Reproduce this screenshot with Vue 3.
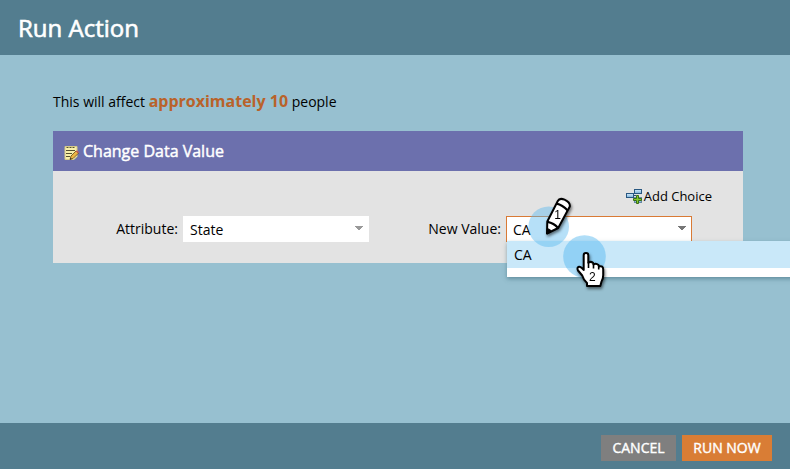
<script setup>
const people = 10
const options = ['CA']
</script>

<template>
  <div class="dialog">
    <header class="title">Run Action</header>
    <main class="body">
      <p class="notice">This will affect <b>approximately {{ people }}</b> people</p>
      <section class="panel">
        <div class="panel-head">
          <svg class="note" width="16" height="16" viewBox="0 0 16 16">
            <path d="M1 1.500h12v10l-3 3H1z" fill="#f8efaa" stroke="#d5ca88" />
            <path d="M2.500 2.500h2M5.500 2.500h2M8.500 2.500h2M2 5.500h9M2 8.500h6M2 11.500h4" stroke="#55502f" />
            <path d="M6 14.500l1-3.500 5-5 2.300 2.300-5 5z" fill="#edb544" stroke="#624719" stroke-width=".8" />
            <path d="M11.800 6.200l1.200-1 2 2-1.100 1.100z" fill="#c95b50" />
            <path d="M6 14.500l.5-1.800 1.300 1.300z" fill="#222" />
          </svg>
          <span>Change Data Value</span>
        </div>
        <div class="panel-body">
          <div class="add">
            <svg width="17" height="16" viewBox="0 0 17 16">
              <defs>
                <linearGradient id="box" x1="0" y1="0" x2="0" y2="1">
                  <stop offset="0" stop-color="#d8efff" /><stop offset="1" stop-color="#78aed7" />
                </linearGradient>
              </defs>
              <path d="M7 7.500h3" stroke="#244f78" />
              <rect x=".5" y="5.500" width="7" height="4" fill="url(#box)" stroke="#285781" />
              <rect x="8.500" y="1.500" width="7" height="4" fill="url(#box)" stroke="#285781" />
              <rect x="8.500" y="9.500" width="7" height="5" fill="url(#box)" stroke="#6689a4" />
              <path d="M10.500 7.500h2v3h3v2h-3v3h-2v-3h-3v-2h3z" fill="#83c72d" stroke="#386f16" />
            </svg>
            <span>Add Choice</span>
          </div>
          <div class="fields">
            <label class="attribute">Attribute:</label>
            <div class="select"><span>State</span>
              <svg class="arrow" width="8" height="5" viewBox="0 0 8 5"><path d="M0 0h8v1H7v1H6v1H5v1H3V3H2V2H1V1H0z" /></svg>
            </div>
            <label class="value">New Value:</label>
            <div class="select active"><span>CA</span>
              <svg class="arrow" width="8" height="5" viewBox="0 0 8 5"><path d="M0 0h8v1H7v1H6v1H5v1H3V3H2V2H1V1H0z" /></svg>
              <div class="menu">
                <div v-for="option in options" :key="option" class="option">{{ option }}</div>
              </div>
            </div>
          </div>
        </div>
      </section>
    </main>
    <footer class="footer">
      <button class="cancel">CANCEL</button>
      <button class="run">RUN NOW</button>
    </footer>
    <svg class="markers" width="100" height="110" viewBox="520 190 100 110">
      <circle cx="548.700" cy="226.700" r="20.300" class="halo" />
      <circle cx="584.500" cy="256.500" r="21.300" class="halo strong" />
      <g class="shadow">
        <path d="M547 233.500L547.300 221.500L557.800 201Q559.500 197.500 564.500 199.700Q570.500 202.500 569.800 206.500L558.200 228Z" class="ink" />
        <path d="M556.500 203.700Q562.500 205 567.500 210.300M547.500 221.800Q554 223 557.800 227.800" class="line" />
        <path d="M547 234l.2-5.500q3 .5 4.300 3z" class="tip" />
        <text x="557.500" y="219" text-anchor="middle">1</text>
      </g>
      <g class="shadow">
        <path d="M583.700 270V255.300Q583.700 253 586 253Q588.300 253 588.300 255.300V262.800Q590.500 261 593 262.800L593.500 264.500Q596 262.700 598.500 265L599 266.500Q603.200 265.300 603.200 269.500V275Q603.200 279 601.500 281.500L600.300 286H587V283Q583.500 280 582.200 275.500L578 270.500Q576.500 267.500 579 266.800Q581 266.500 583.700 270Z" class="ink" />
        <path d="M588.500 262v6M593.500 264v4.500M598.700 265.500v4" class="line fine" />
        <text x="592.300" y="281" text-anchor="middle">2</text>
      </g>
    </svg>
  </div>
</template>

<style>
body { margin: 0; overflow: hidden; }
</style>
<style scoped>
* { box-sizing: border-box; }
.dialog { position: relative; display: flex; flex-direction: column; width: 790px; height: 469px; overflow: hidden; background: #97c0d0; color: #000; font: 14px/20px "Open Sans", sans-serif; }
.title { height: 55px; padding: 10px 18px; background: #537d8f; color: #fff; font-size: 24px; line-height: 36px; -webkit-text-stroke: .6px #fff; }
.body { flex: 1; padding: 35px 47px 0 53px; }
.notice { height: 41px; margin: 0; line-height: 22px; white-space: nowrap; }
.notice b { color: #b9622a; font-size: 16px; }
.panel { width: 690px; height: 132px; background: #e3e3e3; }
.panel-head { display: flex; height: 40px; padding: 0 11px; gap: 3px; background: #6c70ad; color: #fff; font-size: 16px; line-height: 40px; -webkit-text-stroke: .45px #fff; }
.note { margin-top: 14px; }
.panel-body { display: flex; flex-direction: column; padding-top: 15px; }
.add { display: flex; align-items: center; align-self: flex-end; height: 20px; margin-right: 31px; gap: 1px; font-size: 13px; }
.fields { display: flex; margin-top: 10px; line-height: 26px; }
.attribute { width: 130px; padding-right: 5px; text-align: right; }
.value { width: 137px; padding-right: 5px; text-align: right; }
.select { position: relative; display: flex; justify-content: space-between; width: 186px; height: 26px; padding: 1px 6px 0 7px; background: #fff; }
.arrow { margin-top: 9px; fill: #999; }
.active { padding: 0 5px 0 6px; border: 1px solid #d97a35; }
.active .arrow { fill: #777; }
.menu { position: absolute; left: 0; top: 24px; width: 300px; height: 36px; background: #fff; box-shadow: 0 2px 4px #2f607080; }
.option { height: 27px; padding-left: 7px; line-height: 27px; background: #c9e8f9; }
.footer { display: flex; justify-content: flex-end; gap: 6px; height: 46px; padding: 12px 18px 0 0; background: #537d8f; }
button { height: 26px; padding: 0; border: 0; color: #fff; font: 14px/26px "Open Sans", sans-serif; -webkit-text-stroke: .4px #fff; }
.cancel { width: 75px; background: #7f7f7f; }
.run { width: 90px; background: #d97d35; }
.markers { position: absolute; left: 520px; top: 190px; }
.halo { fill: #50b5ef; fill-opacity: .42; }
.strong { fill-opacity: .45; }
.shadow { filter: drop-shadow(1px 2px 1.5px #0008); }
.ink { fill: #fff; stroke: #000; stroke-width: 2; stroke-linejoin: round; }
.line { fill: none; stroke: #000; stroke-width: 2.200; }
.fine { stroke-width: 1.600; }
.tip { stroke: #000; }
text { font: 12px "Liberation Sans", sans-serif; }
</style>
